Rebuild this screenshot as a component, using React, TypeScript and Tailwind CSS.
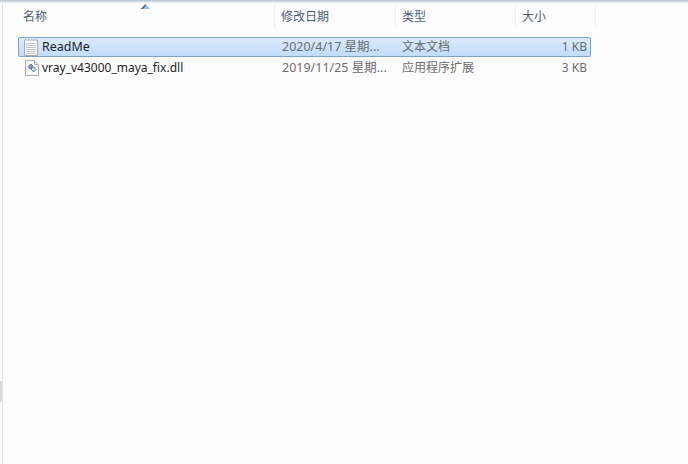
const font = { fontFamily: '"Noto Sans", "Noto Sans CJK SC", sans-serif' };

function TextFileIcon() {
  return (
    <svg width="16" height="17" viewBox="0 0 16 17" className="shrink-0">
      <path d="M.5 1.5 L2 .5 L3.5 1.5 L5 .5 L6.5 1.5 L8 .5 L9.5 1.5 L11 .5 L12.5 1.5 L13.5 .8 V16.5 H.5 Z" fill="#fbfbfb" stroke="#a3a8ac" strokeWidth="1" />
      <path d="M2 4.5H12M2 6.5H12M2 8.5H12M2 10.5H12M2 12.5H12M2 14.5H12" stroke="#bfc3c6" strokeWidth="1" />
    </svg>
  );
}

function DllIcon() {
  return (
    <svg width="14" height="16" viewBox="0 0 14 16" className="shrink-0">
      <path d="M.5.5H9.5L13.5 4.5V15.5H.5Z" fill="#fdfdfd" stroke="#a7abb0" />
      <path d="M9.5.5V4.5H13.5" fill="#e8eaec" stroke="#a7abb0" />
      <path d="M3 6.5 L6 4 L8 6 L5 9 Z" fill="#8a98b8" stroke="#55678f" strokeWidth=".8" />
      <path d="M6 9 L8.5 6.8 L11 9.5 L8.5 12 Z" fill="#d5def0" stroke="#3f6fb5" strokeWidth=".9" />
    </svg>
  );
}

function HeaderCell({ label, className }: { label: string; className: string }) {
  return (
    <div className={`flex h-[24px] items-center border-r border-[#eef0f3] pl-[6px] pt-[2px] text-[12px] text-[#4c607a] ${className}`}>
      {label}
    </div>
  );
}

const rows = [
  { name: 'ReadMe', date: '2020/4/17 星期...', type: '文本文档', size: '1 KB', selected: true },
  { name: 'vray_v43000_maya_fix.dll', date: '2019/11/25 星期...', type: '应用程序扩展', size: '3 KB', selected: false },
];

export default function App() {
  return (
    <div className="relative h-[464px] w-[688px] overflow-hidden bg-white" style={font}>
      <div className="h-[3px] bg-gradient-to-b from-[#b4bfcd] to-[#f3f6fa]" />
      <div className="flex h-[461px]">
        <div className="w-[2px] shrink-0 bg-[#fbfbfb]" />
        <div className="w-px shrink-0 bg-[#d9e6f5]" />
        <div className="flex-1 bg-[#fdfdfd]">
          <div className="relative ml-[15px] mt-[1px] flex">
            <HeaderCell label="名称" className="w-[257px] !pl-[5px]" />
            <HeaderCell label="修改日期" className="w-[121px]" />
            <HeaderCell label="类型" className="w-[120px]" />
            <HeaderCell label="大小" className="w-[80px]" />
            <svg width="9" height="5" viewBox="0 0 9 5" className="absolute left-[123px] top-0">
              <path d="M4.5 0 L9 5 H0 Z" fill="#8fc3e6" />
              <path d="M4.5 0 L0 5 H2 L4.5 2 Z" fill="#3d5f7c" />
            </svg>
          </div>
          <div className="ml-[15px] mt-[9px] flex w-[573px] flex-col">
            {rows.map((r) => (
              <div
                key={r.name}
                className={`flex h-[20px] items-center rounded-[2px] border text-[12px] ${
                  r.selected
                    ? 'mb-px border-[#7da2ce] bg-gradient-to-b from-[#dcebfc] to-[#c1dcfc]'
                    : 'border-transparent'
                }`}
              >
                <div className={`flex w-[256px] items-center ${r.selected ? 'pl-[5px]' : 'pl-[6px]'}`}>
                  {r.selected ? <TextFileIcon /> : <DllIcon />}
                  <span className={`${r.selected ? 'ml-[2px] text-[12.5px]' : 'ml-[3px]'} text-[#1f1f1f]`}>{r.name}</span>
                </div>
                <div className="w-[121px] pl-[7px] text-[12.5px] text-[#6d6d6d]">{r.date}</div>
                <div className="w-[120px] pl-[6px] text-[#6d6d6d]">{r.type}</div>
                <div className="w-[71px] text-right text-[#6d6d6d]">{r.size}</div>
              </div>
            ))}
          </div>
        </div>
      </div>
      <div className="absolute left-0 top-[381px] h-[21px] w-[2px] bg-[#d9d9d9]" />
    </div>
  );
}
